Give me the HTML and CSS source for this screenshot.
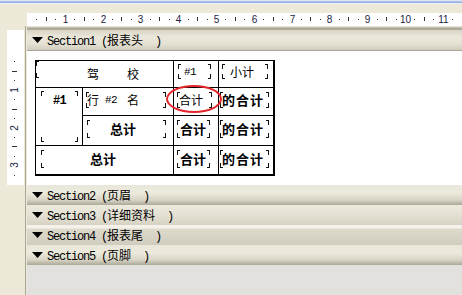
FILE: index.html
```html
<!DOCTYPE html>
<html>
<head>
<meta charset="utf-8">
<link rel="stylesheet" href="styles.css">
</head>
<body>
<div class="app">
  <div class="topbar"></div>
  <div class="rulerrow">
    <div class="corner"></div>
    <div class="hruler">
      <svg width="435" height="13" viewBox="0 0 435 13">
        <path class="ticks" d="M9 6h1v1h-1z M28 6h1v1h-1z M47 6h1v1h-1z M66 6h1v1h-1z M85 6h1v1h-1z M104 6h1v1h-1z M123 6h1v1h-1z M142 6h1v1h-1z M161 6h1v1h-1z M180 6h1v1h-1z M198 6h1v1h-1z M217 6h1v1h-1z M236 6h1v1h-1z M255 6h1v1h-1z M274 6h1v1h-1z M293 6h1v1h-1z M312 6h1v1h-1z M331 6h1v1h-1z M350 6h1v1h-1z M369 6h1v1h-1z M387 6h1v1h-1z M406 6h1v1h-1z M425 6h1v1h-1z M19 4h1v4h-1z M57 4h1v4h-1z M94 4h1v4h-1z M132 4h1v4h-1z M170 4h1v4h-1z M208 4h1v4h-1z M246 4h1v4h-1z M283 4h1v4h-1z M321 4h1v4h-1z M359 4h1v4h-1z M397 4h1v4h-1z"/>
        <g class="nums">
          <text x="38.5" y="10">1</text>
          <text x="76.5" y="10">2</text>
          <text x="113.5" y="10">3</text>
          <text x="151.5" y="10">4</text>
          <text x="189.5" y="10">5</text>
          <text x="227.5" y="10">6</text>
          <text x="265.5" y="10">7</text>
          <text x="302.5" y="10">8</text>
          <text x="340.5" y="10">9</text>
          <text x="378.5" y="10">10</text>
          <text x="416.5" y="10">11</text>
        </g>
      </svg>
    </div>
  </div>
  <div class="main">
    <div class="side">
      <div class="vruler">
        <svg width="17" height="155" viewBox="0 0 17 155">
          <path class="ticks" d="M7 31h1v1h-1z M7 50h1v1h-1z M7 69h1v1h-1z M7 88h1v1h-1z M7 107h1v1h-1z M7 126h1v1h-1z M7 145h1v1h-1z M5 41h5v1h-5z M5 79h5v1h-5z M5 116h5v1h-5z"/>
          <g class="nums">
            <text transform="translate(7.5 60) rotate(-90)" dy="3.5">1</text>
            <text transform="translate(7.5 98) rotate(-90)" dy="3.5">2</text>
            <text transform="translate(7.5 135) rotate(-90)" dy="3.5">3</text>
          </g>
        </svg>
      </div>
    </div>
    <div class="panel">
      <div class="sechead s1">
        <svg class="tri" width="11" height="6" viewBox="0 0 11 6"><path d="M0 0H11L5.5 6Z"/></svg>
        <span class="lbl">Section1 (<span class="zh">报表头</span>  )</span>
      </div>
      <div class="secbody">
        <div class="sheet">
          <div class="cell span2 a1">
            <div class="bx lc"></div>
            <div class="t"><span>驾</span><span>校</span></div>
          </div>
          <div class="cell c1"><div class="bx"><span class="mono">#1</span></div></div>
          <div class="cell r d1"><div class="bx"><span>小计</span></div></div>

          <div class="cell rows2 a2"><div class="bx"><span class="mono b">#1</span></div></div>
          <div class="cell b2"><div class="bx"><span>行</span><span class="mono g1">#2</span><span class="g2">名</span></div></div>
          <div class="cell c2"><div class="bx"><span>合计</span></div></div>
          <div class="cell r dd d2"><div class="bx"><span class="b w">的合计</span></div></div>

          <div class="cell b3"><div class="bx"><span class="b">总计</span></div></div>
          <div class="cell cc c3"><div class="bx"><span class="b">合计</span></div></div>
          <div class="cell r dd d3"><div class="bx"><span class="b w">的合计</span></div></div>

          <div class="cell span2 last a4"><div class="bx lc"><span class="b">总计</span></div></div>
          <div class="cell last cc c4"><div class="bx"><span class="b">合计</span></div></div>
          <div class="cell r last dd d4"><div class="bx"><span class="b w">的合计</span></div></div>

          <div class="ring"></div>
        </div>
      </div>
      <div class="sechead dark">
        <svg class="tri" width="11" height="6" viewBox="0 0 11 6"><path d="M0 0H11L5.5 6Z"/></svg>
        <span class="lbl">Section2 (<span class="zh">页眉</span>  )</span>
      </div>
      <div class="sechead lite">
        <svg class="tri" width="11" height="6" viewBox="0 0 11 6"><path d="M0 0H11L5.5 6Z"/></svg>
        <span class="lbl">Section3 (<span class="zh">详细资料</span>  )</span>
      </div>
      <div class="sechead lite2">
        <svg class="tri" width="11" height="6" viewBox="0 0 11 6"><path d="M0 0H11L5.5 6Z"/></svg>
        <span class="lbl">Section4 (<span class="zh">报表尾</span>  )</span>
      </div>
      <div class="sechead dark">
        <svg class="tri" width="11" height="6" viewBox="0 0 11 6"><path d="M0 0H11L5.5 6Z"/></svg>
        <span class="lbl">Section5 (<span class="zh">页脚</span>  )</span>
      </div>
    </div>
  </div>
</div>
</body>
</html>
```

FILE: styles.css
```css
body {
  margin: 0;
  background: #ece9d8;
}

.app {
  width: 462px;
  height: 295px;
  overflow: hidden;
  display: flex;
  flex-direction: column;
  font-family: "Noto Sans CJK SC", sans-serif;
  color: #000;
}

.topbar {
  flex: none;
  height: 12px;
  background: linear-gradient(#dce4f5 0 1px, #b0c4ec 1px 2px, #95aee0 2px 3px, #eef1f9 3px 4px, #ece9d8 4px);
}

.rulerrow {
  flex: none;
  height: 14px;
  display: flex;
}

.corner {
  flex: none;
  width: 27px;
}

.hruler {
  flex: 1;
  margin-top: 1px;
  background: #fff;
}

.hruler svg,
.vruler svg {
  display: block;
}

.ticks {
  fill: #333;
}

.nums text {
  font: 10px "Liberation Sans", sans-serif;
  fill: #1c1c44;
  text-anchor: middle;
}

.main {
  flex: 1;
  display: flex;
  min-height: 0;
}

.side {
  flex: none;
  width: 25px;
  border-right: 1px solid #aaa694;
}

.vruler {
  margin: 4px 0 0 7px;
  width: 17px;
  height: 155px;
  background: #fff;
}

.panel {
  flex: 1;
  margin-left: 1px;
  padding-top: 4px;
  display: flex;
  flex-direction: column;
  background: linear-gradient(#e4e1d3 0 1px, #c4c0b0 1px 2px, #aeaa9a 2px 4px, #e2e1dd 4px);
}

.sechead {
  flex: none;
  height: 20px;
  display: flex;
  align-items: center;
  gap: 4px;
  padding-left: 5px;
  background: linear-gradient(#e9e7da, #eceadd 40%, #d8d4c5 75%, #aca898);
}

.sechead.s1 {
  border-bottom: 1px solid #aca899;
  background: linear-gradient(#d8d5c6, #ebe8db 35%, #e4e1d3 70%, #d0ccbd);
}

.sechead.lite {
  background: linear-gradient(#eceadd, #e4e1d4 50%, #d6d3c5);
}

.sechead.lite2 {
  background: linear-gradient(#f4f2ea 0 3px, #dedbcd 4px, #d0cdbf);
}

.tri {
  display: block;
  flex: none;
  fill: #000;
}

.lbl {
  font: 12px "Liberation Mono", monospace;
  letter-spacing: -1.2px;
  white-space: pre;
}

.lbl .zh {
  font: 12px "Noto Sans CJK SC", sans-serif;
  letter-spacing: 0;
}

.secbody {
  flex: none;
  height: 134px;
  box-sizing: border-box;
  padding: 9px 0 0 8px;
  background: #fff;
}

/* report grid */
.sheet {
  position: relative;
  display: grid;
  width: max-content;
  grid-template-columns: 47px 91px 45px 54px;
  grid-template-rows: 27px 28px 30px 28px;
  border-style: solid;
  border-color: #000;
  border-width: 1px 2px 2px 1px;
  font-size: 12px;
  line-height: 14px;
}

.cell {
  box-sizing: border-box;
  border-right: 1px solid #000;
  border-bottom: 1px solid #000;
  display: flex;
  align-items: flex-start;
}

.cell.r {
  border-right: 0;
}

.cell.last {
  border-bottom: 0;
}

.span2 {
  grid-column: span 2;
}

.rows2 {
  grid-row: span 2;
}

.bx {
  --k: linear-gradient(#111, #111);
  box-sizing: border-box;
  display: flex;
  align-items: center;
  justify-content: flex-start;
  background:
    var(--k) left top / 1px 5px,
    var(--k) left top / 3px 1px,
    var(--k) right top / 1px 5px,
    var(--k) right top / 3px 1px,
    var(--k) left bottom / 1px 5px,
    var(--k) left bottom / 3px 1px,
    var(--k) right bottom / 1px 5px,
    var(--k) right bottom / 3px 1px;
  background-repeat: no-repeat;
}

.bx.lc {
  background:
    var(--k) left top / 1px 5px,
    var(--k) left top / 3px 1px,
    var(--k) left bottom / 1px 5px,
    var(--k) left bottom / 3px 1px;
  background-repeat: no-repeat;
}

.mono {
  font-family: "Liberation Mono", monospace;
  font-size: 11px;
  letter-spacing: -0.6px;
}

.b {
  font-weight: 700;
  font-size: 13px;
}

.mono.b {
  font-size: 12px;
  letter-spacing: -0.6px;
}

.w {
  letter-spacing: 1px;
}

.a1 {
  display: grid;
}

.a1 > * {
  grid-area: 1 / 1;
}

.a1 .bx {
  align-self: start;
  height: 17px;
}

.a1 .t {
  align-self: center;
  padding-left: 51px;
  display: flex;
  gap: 28px;
}

.c1 {
  padding: 3px 0 0 4px;
}

.c1 .bx {
  width: 33px;
  height: 15px;
  padding-left: 6px;
}

.d1 {
  padding: 3px 0 0 3px;
}

.d1 .bx {
  width: 46px;
  height: 15px;
  padding-left: 8px;
}

.a2 {
  padding: 3px 0 0 5px;
}

.a2 .bx {
  width: 37px;
  height: 51px;
  align-items: flex-start;
  justify-content: center;
  padding-top: 3px;
}

.b2 {
  padding: 4px 0 0 3px;
}

.b2 .bx {
  width: 80px;
  height: 16px;
  padding-left: 1px;
}

.g1 {
  margin-left: 6px;
}

.g2 {
  margin-left: 10px;
}

.c2 {
  padding: 4px 0 0 3px;
}

.c2 .bx {
  width: 35px;
  height: 16px;
  padding-left: 2px;
}

.dd {
  padding: 4px 0 0 1px;
}

.dd .bx {
  width: 49px;
  height: 18px;
  padding-left: 2px;
}

.d2 .bx {
  height: 16px;
}

.b3 {
  padding: 4px 0 0 4px;
}

.b3 .bx {
  width: 79px;
  height: 18px;
  padding-left: 23px;
}

.cc {
  padding: 4px 0 0 3px;
}

.cc .bx {
  width: 33px;
  height: 18px;
  padding-left: 3px;
}

.a4 {
  padding: 4px 0 0 5px;
}

.a4 .bx {
  width: 132px;
  height: 18px;
  padding-left: 49px;
}

.ring {
  position: absolute;
  left: 130px;
  top: 24px;
  width: 56px;
  height: 28px;
  box-sizing: border-box;
  border: 2px solid #e3262b;
  border-radius: 50%;
}
```
